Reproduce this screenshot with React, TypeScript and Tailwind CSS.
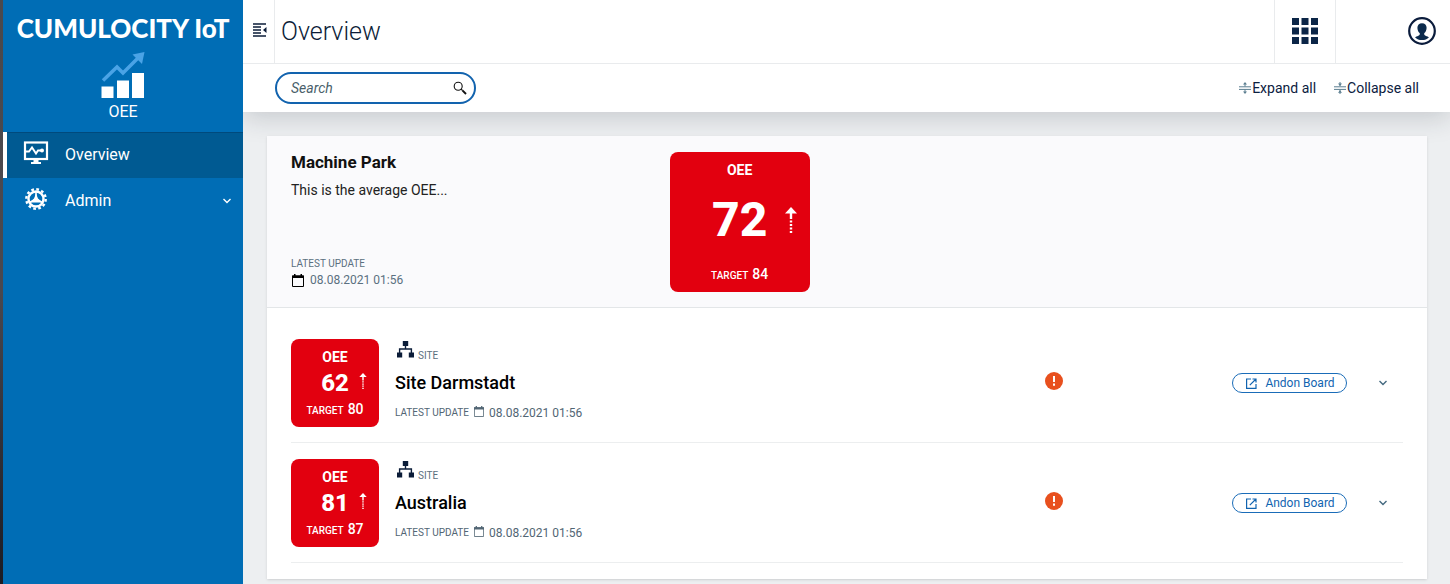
import type { ReactNode } from "react";

type Site = { name: string; value: number; target: number; updated: string };

const sites: Site[] = [
  { name: "Site Darmstadt", value: 62, target: 80, updated: "08.08.2021 01:56" },
  { name: "Australia", value: 81, target: 87, updated: "08.08.2021 01:56" },
];

function OeeLogo() {
  return (
    <svg viewBox="0 0 44 47" className="h-[47px] w-11" aria-hidden="true">
      <path d="M2 28.500L16 15L22 21L37.500 5.500" fill="none" stroke="#4aa3e6" strokeWidth="3.500" />
      <path d="M31.500 2.500L43.500 0L41 12Z" fill="#4aa3e6" />
      <path d="M0.500 34.500h12V46H0.500zM16 28.500h12V46h-12zM31 21h12v25H31z" fill="#fff" />
    </svg>
  );
}

function MonitorIcon() {
  return (
    <svg viewBox="0 0 26 24" className="h-6 w-[26px]" aria-hidden="true">
      <rect x="2" y="1.500" width="22" height="16.500" fill="none" stroke="#fff" strokeWidth="2.200" />
      <path d="M3 10.500H6L9 6.500L13 12.500L15 9.500H19" fill="none" stroke="#fff" strokeWidth="1.900" />
      <circle cx="19" cy="9.500" r="2" fill="#fff" />
      <path d="M10.500 18h5v3H18V23H8v-2h2.500z" fill="#fff" />
    </svg>
  );
}

function GearIcon() {
  return (
    <svg viewBox="0 0 24 24" className="h-6 w-6" aria-hidden="true">
      <circle cx="12" cy="12" r="9.700" fill="none" stroke="#fff" strokeWidth="2.400" strokeDasharray="2.700 2.379" />
      <circle cx="12" cy="12" r="7.500" fill="none" stroke="#fff" strokeWidth="2.400" />
      <path d="M12 5v5M12 12L5.500 15.500M12 12l6.500 3.500" stroke="#fff" strokeWidth="1.600" />
      <path d="M12 6.500l2 5 4 4H6l4-4z" fill="#fff" />
    </svg>
  );
}

function ChevronDown({ className }: { className: string }) {
  return (
    <svg viewBox="0 0 10 10" className={className} fill="none" stroke="currentColor" strokeWidth="1.400" aria-hidden="true">
      <path d="M1.500 3L5 6.500L8.500 3" />
    </svg>
  );
}

function MenuCollapseIcon() {
  return (
    <svg viewBox="0 0 14 14" className="h-3.5 w-3.5" aria-hidden="true">
      <path d="M0 1h13M0 4h8M0 7h8M0 10h8M0 13h13" stroke="#0b1c38" strokeWidth="1.400" />
      <path d="M13.500 4v6L10 7z" fill="#0b1c38" />
    </svg>
  );
}

function AppsIcon() {
  return (
    <svg viewBox="0 0 26 26" className="h-[26px] w-[26px]" fill="#0b2547" aria-hidden="true">
      <path d="M0 0h7v7H0zM9.500 0h7v7h-7zM19 0h7v7h-7zM0 9.500h7v7H0zM9.500 9.500h7v7h-7zM19 9.500h7v7h-7zM0 19h7v7H0zM9.500 19h7v7h-7zM19 19h7v7h-7z" />
    </svg>
  );
}

function UserIcon() {
  return (
    <svg viewBox="0 0 28 28" className="h-7 w-7" aria-hidden="true">
      <circle cx="14" cy="14" r="12.800" fill="none" stroke="#0b1c3c" strokeWidth="2.200" />
      <path
        d="M14 6.200c-2.900 0-4.600 1.900-4.600 4.600 0 2.200.9 4.300 2.400 5.500 0 1.600-.2 2-1.400 2.400-1.500.5-2.700 1-3.300 1.700C8.700 22 11.200 23 14 23s5.300-1 6.900-2.600c-.6-.7-1.800-1.200-3.300-1.700-1.200-.4-1.400-.8-1.400-2.400 1.500-1.200 2.400-3.300 2.400-5.500 0-2.700-1.700-4.600-4.600-4.600z"
        fill="#0b2a4c"
      />
    </svg>
  );
}

function SearchIcon() {
  return (
    <svg viewBox="0 0 14 14" className="h-3.5 w-3.5" fill="none" stroke="#111" aria-hidden="true">
      <circle cx="5.200" cy="5.200" r="4" strokeWidth="1.100" />
      <path d="M8.200 8.200L9.500 9.500" strokeWidth="1.100" />
      <path d="M9.400 9.400L13 13" strokeWidth="1.900" />
    </svg>
  );
}

function ExpandIcon() {
  return (
    <svg viewBox="0 0 12 12" className="h-3 w-3" aria-hidden="true">
      <path d="M0 4.800h12M0 7.400h12M6 1v3.500M6 7.500V11" stroke="#5b7e90" strokeWidth="1" />
      <path d="M4 2.500L6 0l2 2.500zM4 9.500L6 12l2-2.500z" fill="#5b7e90" />
    </svg>
  );
}

function CollapseIcon() {
  return (
    <svg viewBox="0 0 12 12" className="h-3 w-3" aria-hidden="true">
      <path d="M0 4.800h12M0 7.400h12M6 0v4M6 8v4" stroke="#5b7e90" strokeWidth="1" />
      <path d="M4 1.500L6 4L8 1.500zM4 10.700L6 8.200l2 2.500z" fill="#5b7e90" />
    </svg>
  );
}

function CalendarIcon({ className }: { className: string }) {
  return (
    <svg viewBox="0 0 12 13" className={className} aria-hidden="true">
      <path d="M0.500 2h11v10.500H0.500z" fill="none" stroke="currentColor" strokeWidth="1" />
      <path d="M0 1.500h12V4H0zM2 0h1.500v2H2zM8.500 0H10v2H8.500z" fill="currentColor" />
    </svg>
  );
}

function SiteIcon() {
  return (
    <svg viewBox="0 0 17 17" className="h-[17px] w-[17px]" fill="#0b1c38" aria-hidden="true">
      <path d="M5.800 0h5.400v5H5.800zM0 11.500h5.200v5H0zM11.800 11.500H17v5h-5.200z" />
      <path d="M8.500 4v4M2.600 12V8h11.800v4" fill="none" stroke="#0b1c38" strokeWidth="1.400" />
    </svg>
  );
}

function TrendUpIcon({ className }: { className: string }) {
  return (
    <svg viewBox="0 0 12 26" className={className} aria-hidden="true">
      <path d="M6 0l6 6.500H0z" fill="#fff" />
      <path d="M6 5v7M6 13.500v2M6 17v2M6 20.500v2M6 24v2" stroke="#fff" strokeWidth="2.400" />
    </svg>
  );
}

function AlertIcon() {
  return (
    <svg viewBox="0 0 18 18" className="h-[18px] w-[18px]" role="img" aria-label="Alarm">
      <circle cx="9" cy="9" r="9" fill="#e8501e" />
      <path d="M9 4v6M9 11.500v2.200" stroke="#fff" strokeWidth="2" />
    </svg>
  );
}

function OpenIcon() {
  return (
    <svg viewBox="0 0 11 11" className="h-[11px] w-[11px]" fill="none" stroke="currentColor" strokeWidth="1.200" aria-hidden="true">
      <path d="M5 1H.6v9.400H10V6M6.500 1H10v3.500M10 1L3.800 7.200" />
    </svg>
  );
}

function TargetLabel({ target }: { target: number }) {
  return (
    <div className="flex items-baseline gap-1 text-[10px] leading-5 font-medium">
      TARGET <span className="text-sm leading-5">{target}</span>
    </div>
  );
}

function LargeTile({ value, target }: { value: number; target: number }) {
  return (
    <div className="flex h-[140px] w-[140px] flex-col items-center justify-between rounded-lg bg-[#e2000f] pt-2 pb-1.5 text-white">
      <div className="text-sm leading-5 font-bold">OEE</div>
      <div className="grid w-full grid-cols-[1fr_auto_1fr] items-center pb-1">
        <span className="col-start-2 text-5xl leading-12 font-extrabold">{value}</span>
        <TrendUpIcon className="ml-[18px] h-[26px] w-3" />
      </div>
      <TargetLabel target={target} />
    </div>
  );
}

function SmallTile({ value, target }: { value: number; target: number }) {
  return (
    <div className="flex h-[88px] w-[88px] shrink-0 flex-col items-center justify-between rounded-lg bg-[#e2000f] pt-2 pb-1.5 text-white">
      <div className="text-sm leading-5 font-bold">OEE</div>
      <div className="grid w-full grid-cols-[1fr_auto_1fr] items-center">
        <span className="col-start-2 text-2xl leading-6 font-extrabold">{value}</span>
        <TrendUpIcon className="mb-1 ml-2.5 h-4 w-2" />
      </div>
      <TargetLabel target={target} />
    </div>
  );
}

function NavItem({ icon, label, active, chevron }: { icon: ReactNode; label: string; active?: boolean; chevron?: boolean }) {
  return (
    <a
      href="#"
      aria-current={active ? "page" : undefined}
      className={
        active
          ? "flex h-[46px] items-center border-l-4 border-l-white bg-[#005a92] pr-[11px] text-white shadow-[inset_0_1px_0_#004a7d]"
          : "flex h-[46px] items-center border-l-4 border-l-transparent pr-[11px] text-white"
      }
    >
      <span className="ml-3.5 flex w-[30px] items-center justify-center pb-1">{icon}</span>
      <span className="ml-3.5 flex-1 text-base">{label}</span>
      {chevron && <ChevronDown className="h-2.5 w-2.5" />}
    </a>
  );
}

function SiteRow({ site }: { site: Site }) {
  return (
    <li className="flex items-center border-b border-[#eceeef] pt-4 pb-[15px]">
      <SmallTile value={site.value} target={site.target} />
      <div className="ml-4 flex-1 self-start">
        <div className="flex items-end gap-1 pt-0.5 pl-0.5">
          <SiteIcon />
          <span className="text-[10px] leading-1 text-[#5b7080]">SITE</span>
        </div>
        <h3 className="mt-[13px] text-lg leading-6 font-medium text-black">{site.name}</h3>
        <div className="mt-2 flex items-center text-[#526674]">
          <span className="text-[10px] leading-5">LATEST UPDATE</span>
          <CalendarIcon className="mr-[5px] mb-1 ml-[5px] h-[11px] w-2.5" />
          <span className="text-xs leading-5">{site.updated}</span>
        </div>
      </div>
      <div className="w-[187px] pb-1">
        <AlertIcon />
      </div>
      <button type="button" className="flex h-5 w-[115px] items-center justify-center gap-2 rounded-full border border-[#1a6cb8] pl-0.5 text-xs text-[#1164b0]">
        <OpenIcon />
        Andon Board
      </button>
      <button type="button" aria-label={`Expand ${site.name}`} className="mr-[15px] ml-[31px] text-[#456a80]">
        <ChevronDown className="h-2.5 w-2.5" />
      </button>
    </li>
  );
}

export default function App() {
  return (
    <div className="flex min-h-screen bg-[#edeff1] font-['Roboto',sans-serif] text-black">
      <div className="relative z-10 w-[3px] shrink-0 bg-linear-to-b from-[#4b494c] via-[#4a484f] to-[#1c1c24]" />
      <aside className="relative z-10 w-60 shrink-0 bg-[#006db5]">
        <div className="flex h-[132px] flex-col items-center pt-4 text-white">
          <div className="font-['Lato',sans-serif] text-[26px] leading-6 font-black whitespace-nowrap">
            CUMULOCITY IoT
          </div>
          <div className="mt-3">
            <OeeLogo />
          </div>
          <div className="mt-[3px] text-base leading-5">OEE</div>
        </div>
        <nav>
          <NavItem icon={<MonitorIcon />} label="Overview" active />
          <NavItem icon={<GearIcon />} label="Admin" chevron />
        </nav>
      </aside>

      <div className="min-w-0 flex-1">
        <div className="bg-white shadow-[0_6px_24px_rgba(30,40,50,0.18)]">
          <header className="flex h-16 items-stretch border-b border-[#e9ebed]">
            <button type="button" aria-label="Toggle navigation" className="flex w-8 items-center justify-center border-r border-[#e9ebed] pb-1 pl-0.5">
              <MenuCollapseIcon />
            </button>
            <h1 className="flex flex-1 items-center pl-1.5 text-[25px] font-light text-[#0b1c38]">Overview</h1>
            <button type="button" aria-label="Applications" className="flex w-[62px] items-center justify-center border-x border-[#e9ebed] pb-px">
              <AppsIcon />
            </button>
            <button type="button" aria-label="User" className="flex w-[114px] items-center justify-end pr-3.5 pb-px">
              <UserIcon />
            </button>
          </header>
          <div className="flex h-12 items-center pr-[31px] pl-8">
            <label className="flex h-8 w-[201px] items-center rounded-full border-2 border-[#1263ae] pr-[7px] pl-3.5">
              <input
                type="search"
                aria-label="Search"
                placeholder="Search"
                className="min-w-0 flex-1 text-sm italic outline-none placeholder:text-[#4a5f6b]"
              />
              <SearchIcon />
            </label>
            <div className="ml-auto flex gap-[18px] text-sm text-[#0b2040]">
              <button type="button" className="flex items-center gap-px">
                <ExpandIcon />
                Expand all
              </button>
              <button type="button" className="flex items-center gap-px">
                <CollapseIcon />
                Collapse all
              </button>
            </div>
          </div>
        </div>

        <main className="pt-6 pr-[23px] pl-6">
          <div className="bg-white shadow-sm">
            <section className="grid grid-cols-3 gap-6 border-b border-[#e3e6e8] bg-[#fafafc] px-6 pt-4 pb-[15px]">
              <div className="flex flex-col pb-0.5">
                <h2 className="text-[17px] leading-5 font-bold text-[#111]">Machine Park</h2>
                <p className="mt-2 text-sm leading-5 text-[#222]">This is the average OEE...</p>
                <div className="mt-auto text-[#5b7080]">
                  <div className="text-[10px] leading-3">LATEST UPDATE</div>
                  <div className="flex items-center gap-1.5 pl-px text-xs leading-5">
                    <CalendarIcon className="h-[13px] w-3 text-black" />
                    08.08.2021 01:56
                  </div>
                </div>
              </div>
              <LargeTile value={72} target={84} />
            </section>
            <ul className="pt-[15px] pr-6 pb-4 pl-6">
              {sites.map((site) => (
                <SiteRow key={site.name} site={site} />
              ))}
            </ul>
          </div>
        </main>
      </div>
    </div>
  );
}
